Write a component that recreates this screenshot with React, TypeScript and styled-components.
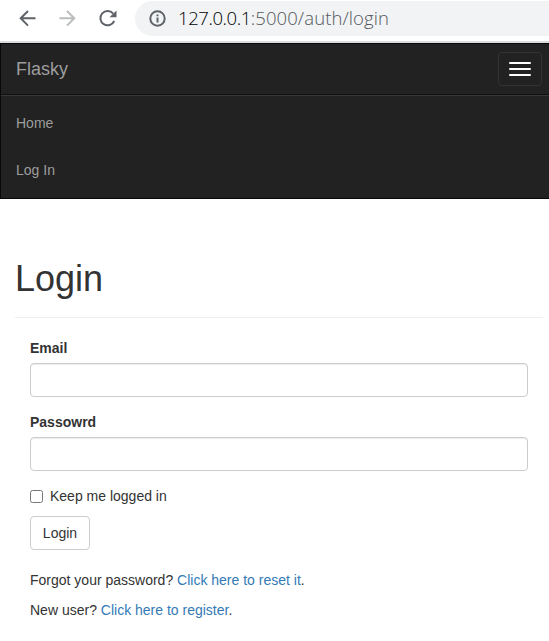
import React from "react";
import styled, { createGlobalStyle } from "styled-components";

const GlobalStyle = createGlobalStyle`
  * { box-sizing: border-box; }
  body {
    margin: 0;
    overflow: hidden;
    background: #fff;
    color: #333;
    font: 14px/20px "Liberation Sans", Arial, sans-serif;
  }
`;

const Page = styled.div`
  width: 549px;
  height: 641px;
  overflow: hidden;
`;

const BrowserBar = styled.header`
  display: flex;
  align-items: flex-start;
  height: 43px;
  padding: 1px 0 0 18px;
  border-bottom: 2px solid #dadce0;
`;

const BrowserIcon = styled.svg<{ $gap: number }>`
  flex: none;
  width: 20px;
  height: 20px;
  margin: 7px ${(p) => p.$gap}px 0 0;
  fill: none;
  stroke-width: 2;
`;

const AddressBar = styled.div`
  flex: 1;
  display: flex;
  height: 35px;
  padding-left: 14px;
  border-radius: 18px 0 0 18px;
  background: #f1f3f4;
`;

const InfoIcon = styled.svg`
  width: 17px;
  height: 17px;
  margin: 9px 12px 0 0;
  fill: none;
  stroke: #5f6368;
  stroke-width: 2;
`;

const Url = styled.span`
  color: #54585c;
  font: 300 18.5px/34px "Open Sans", sans-serif;
  letter-spacing: 0.08px;
  white-space: nowrap;
`;

const Host = styled.span`
  color: #000;
  letter-spacing: -0.42px;
`;

const Navbar = styled.nav`
  height: 156px;
  border: 1px solid #080808;
  border-right: 0;
  background: #222;
  color: #9d9d9d;
`;

const NavHeader = styled.div`
  display: flex;
  justify-content: space-between;
  align-items: flex-start;
  height: 50px;
  padding: 8px 7px 0 15px;
`;

const Brand = styled.a`
  padding-top: 7px;
  font-size: 18px;
`;

const Toggle = styled.button`
  display: flex;
  flex-direction: column;
  gap: 4px;
  width: 44px;
  height: 34px;
  padding: 9px 10px;
  border: 1px solid #333;
  border-radius: 4px;
  background: transparent;
`;

const ToggleLine = styled.span`
  width: 22px;
  height: 2px;
  border-radius: 1px;
  background: #fff;
`;

const NavLinks = styled.div`
  display: flex;
  flex-direction: column;
  gap: 27px;
  padding: 18px 15px 0;
  border-top: 1px solid #101010;
  box-shadow: inset 0 1px 0 rgba(255, 255, 255, 0.1);
`;

const NavLink = styled.a`
  line-height: 20px;
`;

const Content = styled.main`
  width: 543px;
  padding: 60px 0 0 15px;
`;

const Title = styled.h1`
  margin: 0;
  height: 59px;
  border-bottom: 1px solid #eee;
  font-size: 36px;
  font-weight: 400;
  line-height: 40px;
`;

const Form = styled.form`
  padding: 20px 15px 0;
`;

const Field = styled.div`
  margin-bottom: 15px;
`;

const Label = styled.label`
  display: block;
  margin-bottom: 5px;
  font-weight: 700;
`;

const Input = styled.input`
  display: block;
  width: 100%;
  height: 34px;
  padding: 6px 12px;
  border: 1px solid #ccc;
  border-radius: 4px;
  box-shadow: inset 0 1px 1px rgba(0, 0, 0, 0.075);
`;

const CheckLabel = styled.label`
  display: flex;
  align-items: center;
  gap: 7px;
  margin-bottom: 10px;
`;

const Checkbox = styled.input`
  width: 13px;
  height: 13px;
  margin: 0;
`;

const Submit = styled.button`
  display: block;
  width: 60px;
  height: 34px;
  margin-bottom: 20px;
  padding: 0;
  border: 1px solid #ccc;
  border-radius: 4px;
  background: #fff;
  color: #333;
  font: inherit;
`;

const Hint = styled.p`
  margin: 0 0 10px;
`;

const Link = styled.a`
  color: #337ab7;
`;

export default function App() {
  return (
    <Page>
      <GlobalStyle />
      <BrowserBar>
        <BrowserIcon $gap={20} stroke="#5f6368" viewBox="0 0 20 20">
          <path d="M17.5 10.3H3M10 3L2.7 10.3L10 17.6" />
        </BrowserIcon>
        <BrowserIcon $gap={20} stroke="#babcbe" viewBox="0 0 20 20">
          <path d="M1.5 10.3H16M9 3L16.3 10.3L9 17.6" />
        </BrowserIcon>
        <BrowserIcon $gap={17} stroke="#5f6368" viewBox="0 0 20 20">
          <path d="M16.2 13A7.2 7.2 0 1 1 15.2 5.6" />
          <path d="M18.5 2.4V9.3H11.5Z" fill="#5f6368" stroke="none" />
        </BrowserIcon>
        <AddressBar>
          <InfoIcon viewBox="0 0 17 17">
            <circle cx="8.5" cy="8.5" r="7.2" />
            <path d="M8.5 7.5V12.5M8.5 4.5V6.3" />
          </InfoIcon>
          <Url>
            <Host>127.0.0.1</Host>:5000/auth/login
          </Url>
        </AddressBar>
      </BrowserBar>
      <Navbar>
        <NavHeader>
          <Brand>Flasky</Brand>
          <Toggle aria-label="Toggle navigation">
            <ToggleLine />
            <ToggleLine />
            <ToggleLine />
          </Toggle>
        </NavHeader>
        <NavLinks>
          <NavLink>Home</NavLink>
          <NavLink>Log In</NavLink>
        </NavLinks>
      </Navbar>
      <Content>
        <Title>Login</Title>
        <Form>
          <Field>
            <Label htmlFor="email">Email</Label>
            <Input id="email" type="text" />
          </Field>
          <Field>
            <Label htmlFor="password">Passowrd</Label>
            <Input id="password" type="password" />
          </Field>
          <CheckLabel>
            <Checkbox type="checkbox" />
            Keep me logged in
          </CheckLabel>
          <Submit type="button">Login</Submit>
          <Hint>
            Forgot your password? <Link>Click here to reset it</Link>.
          </Hint>
          <Hint>
            New user? <Link>Click here to register</Link>.
          </Hint>
        </Form>
      </Content>
    </Page>
  );
}
